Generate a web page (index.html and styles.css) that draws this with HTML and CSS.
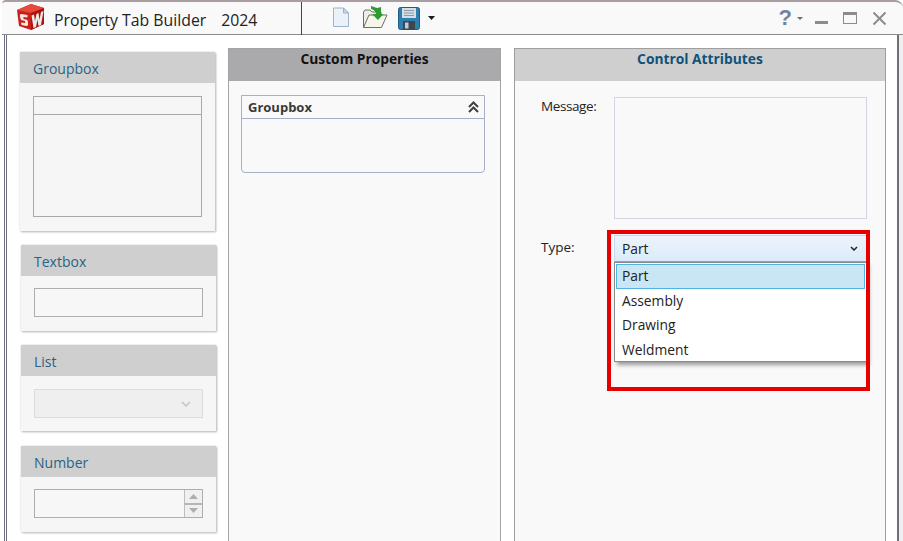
FILE: index.html
```html
<!DOCTYPE html>
<html lang="en">
<head>
<meta charset="utf-8">
<title>Property Tab Builder 2024</title>
<link rel="stylesheet" href="styles.css">
</head>
<body>
<div class="window">
  <header class="titlebar">
    <svg class="logo" width="30" height="28" viewBox="0 0 30 28">
      <path d="M1 7 L15 1 L28 5 L28 21 L15 27 L3 23 Z" fill="#c9201c"/>
      <path d="M1 7 L15 1 L28 5 L15 10 Z" fill="#e8493c"/>
      <path d="M15 10 L28 5 L28 21 L15 27 Z" fill="#a81512"/>
      <path d="M11.500 12 L5 11 Q3.500 11 4 14 L5 17 L9 18 L9 20 L5 19.500 L5.500 22 L10.500 23 Q12.500 23 12 20 L11.500 17 L7.500 16 L7.500 14 L11.500 14.500 Z" fill="#f4e6e2"/>
      <path d="M15.500 12.500 L18 11.500 L19 18 L20.500 11 L22.500 10 L23.500 17 L25 9 L27.500 8 L25 22 L22.500 23 L21.500 16.500 L20 24 L17.500 25 Z" fill="#f1e9e6"/>
    </svg>
    <span class="app-name">Property Tab Builder</span>
    <span class="app-year">2024</span>
    <div class="tools">
      <svg class="tool-new" width="18" height="21" viewBox="0 0 18 21">
        <path d="M1.500 1 H11.500 L16.500 6 V19.500 H1.500 Z" fill="#eaf1f9" stroke="#9fb3c8"/>
        <path d="M11.500 1 V6 H16.500 Z" fill="#c9d8e8" stroke="#9fb3c8"/>
      </svg>
      <svg class="tool-open" width="26" height="24" viewBox="0 0 26 24">
        <path d="M1.500 22.500 V7 L3 5 H8 L10 7 H19 V10" fill="#efeee6" stroke="#6f6f66"/>
        <path d="M1.500 22.500 L7 10 H25 L19.500 22.500 Z" fill="#f6f5ea" stroke="#6f6f66"/>
        <path d="M9 1 L15 3 L19 2 V9 H21.500 L16 15 L10 9 H14 Q13.500 5 9 4 Z" fill="#2f9a34"/>
      </svg>
      <svg class="tool-save" width="22" height="23" viewBox="0 0 22 23">
        <rect x="0.500" y="0.500" width="21" height="22" rx="2" fill="#2c7fae" stroke="#1f5d86"/>
        <rect x="4" y="1" width="14" height="10" fill="#d5dee6"/>
        <path d="M6 3.500 H16 M6 6 H16 M6 8.500 H16" stroke="#8a9aa8"/>
        <rect x="5" y="14" width="12" height="8.500" fill="#3b4650"/>
        <rect x="7" y="15.500" width="3.500" height="6" fill="#c0ccd6"/>
      </svg>
      <svg class="caret" width="7" height="4" viewBox="0 0 7 4"><path d="M0 0 H7 L3.500 4 Z" fill="#1a1a1a"/></svg>
    </div>
    <div class="win-controls">
      <span class="help">?</span>
      <svg class="help-caret" width="6" height="3" viewBox="0 0 6 3"><path d="M0 0 H6 L3 3 Z" fill="#5f6f85"/></svg>
      <span class="minimize"></span>
      <span class="maximize"></span>
      <svg class="close" width="15" height="15" viewBox="0 0 15 15"><path d="M1.500 1.500 L13.500 13.500 M13.500 1.500 L1.500 13.500" stroke="#8c8c8c" stroke-width="2"/></svg>
    </div>
  </header>

  <main class="workspace">
    <aside class="palette">
      <section class="card card-first">
        <h3 class="card-head">Groupbox</h3>
        <div class="card-body body-group">
          <div class="mini-group"><div class="mini-group-head"></div></div>
        </div>
      </section>
      <section class="card card-text">
        <h3 class="card-head">Textbox</h3>
        <div class="card-body body-tight"><div class="field"></div></div>
      </section>
      <section class="card">
        <h3 class="card-head">List</h3>
        <div class="card-body">
          <div class="field field-disabled">
            <svg width="10" height="6" viewBox="0 0 10 6"><path d="M1 1 L5 5 L9 1" fill="none" stroke="#c4c4c4" stroke-width="1.500"/></svg>
          </div>
        </div>
      </section>
      <section class="card card-number">
        <h3 class="card-head">Number</h3>
        <div class="card-body body-tight">
          <div class="field field-number">
            <div class="spin">
              <span class="spin-btn"><svg width="9" height="5" viewBox="0 0 9 5"><path d="M0 5 H9 L4.500 0 Z" fill="#aeaeae"/></svg></span>
              <span class="spin-btn"><svg width="9" height="5" viewBox="0 0 9 5"><path d="M0 0 H9 L4.500 5 Z" fill="#aeaeae"/></svg></span>
            </div>
          </div>
        </div>
      </section>
    </aside>

    <section class="panel panel-center">
      <h2 class="panel-head head-dark">Custom Properties</h2>
      <div class="panel-body">
        <div class="groupbox">
          <div class="groupbox-head">
            <span>Groupbox</span>
            <svg width="11" height="12" viewBox="0 0 11 12"><path d="M1 6 L5.500 1.500 L10 6 M1 11 L5.500 6.500 L10 11" fill="none" stroke="#3f3f3f" stroke-width="2"/></svg>
          </div>
        </div>
      </div>
    </section>

    <section class="panel panel-right">
      <h2 class="panel-head head-light">Control Attributes</h2>
      <div class="panel-body attrs">
        <div class="attr-label label-message">Message:</div>
        <div class="message-box"></div>
        <div class="attr-label label-type">Type:</div>
        <div class="combo">
          <span>Part</span>
          <svg width="8" height="5" viewBox="0 0 8 5"><path d="M1 1 L4 4 L7 1" fill="none" stroke="#222" stroke-width="1.500"/></svg>
        </div>
      </div>
      <ul class="dropdown">
        <li class="option option-active">Part</li>
        <li class="option">Assembly</li>
        <li class="option">Drawing</li>
        <li class="option">Weldment</li>
      </ul>
      <div class="highlight"></div>
    </section>
  </main>
</div>
</body>
</html>
```
FILE: styles.css
```css
* { box-sizing: border-box; }
html, body { margin: 0; height: 100%; }
body {
  background: #fff;
  font-family: "Open Sans", "Noto Sans", sans-serif;
  font-size: 14px;
  color: #222;
  overflow: hidden;
}
.window { width: 903px; height: 541px; display: flex; flex-direction: column; overflow: hidden; }

.titlebar {
  flex: none;
  height: 35px;
  margin-left: 2px;
  padding-left: 14px;
  display: flex;
  align-items: center;
  background: #f9f9f9;
  border-top: 2px solid #a89ea1;
  border-bottom: 1px solid #8b8b8b;
  border-top-right-radius: 8px;
  border-top-left-radius: 4px;
}
.logo { flex: none; margin-top: -3px; }
.app-name { margin-left: 8px; margin-top: 3px; font-size: 15.800px; color: #222; white-space: nowrap; }
.app-year { margin-left: 15px; margin-top: 3px; font-size: 15.800px; color: #222; }
.tools {
  margin-left: 44px;
  height: 33px;
  padding-left: 30px;
  display: flex;
  align-items: center;
  border-left: 1px solid #444;
}
.tool-new { margin-top: -1px; }
.tool-open { margin-left: 12px; margin-top: -3px; }
.tool-save { margin-left: 10px; }
.caret { margin-left: 8px; }
.win-controls { margin-left: auto; padding-right: 16px; display: flex; align-items: center; }
.help { font: bold 22px "Liberation Sans", sans-serif; color: #70839d; line-height: 22px; }
.help-caret { margin-left: 5px; }
.minimize { width: 13px; height: 3px; margin-left: 12px; margin-top: 9px; background: #8c8c8c; }
.maximize { width: 14px; height: 12px; margin-left: 15px; border: 1px solid #8c8c8c; border-top-width: 3px; }
.close { margin-left: 15px; }

.workspace {
  flex: 1;
  min-height: 0;
  margin-left: 4px;
  margin-right: 4px;
  padding: 13px 10px 0 15px;
  display: flex;
  align-items: stretch;
  border-left: 3px double #6e7180;
  border-right: 2px solid #6f7077;
  background: #fff;
  box-shadow: 5px 0 0 #eeeeee;
}

.palette { flex: none; width: 196px; margin-top: 4px; display: flex; flex-direction: column; gap: 14px; margin-left: -2px; }
.card {
  flex: none;
  margin-left: 1px;
  width: 195px;
  background: #f6f6f6;
  box-shadow: 1px 1px 2px #b8b8b8, 0 0 2px #dedede;
}
.card-first { margin-left: 0; }
.card-number { margin-top: 1px; }
.card-head {
  margin: 0;
  height: 31px;
  padding: 7px 0 0 13px;
  background: #cfcfcf;
  color: #2a6382;
  font-size: 14px;
  font-weight: 400;
  line-height: 20px;
}
.card-body { height: 55px; padding: 13px 13px 0 13px; }
.body-tight { padding-top: 12px; }
.body-group { height: 148px; }
.mini-group { height: 121px; border: 1px solid #a9a9a9; }
.mini-group-head { height: 18px; border-bottom: 1px solid #a9a9a9; }
.field { height: 29px; border: 1px solid #aeaeae; background: #f7f7f7; }
.field-disabled {
  display: flex;
  align-items: center;
  justify-content: flex-end;
  padding-right: 11px;
  background: #efefef;
  border-color: #dcdcdc;
}
.field-number { display: flex; justify-content: flex-end; }
.spin { width: 18px; display: flex; flex-direction: column; }
.spin-btn {
  flex: 1;
  display: flex;
  align-items: center;
  justify-content: center;
  border-left: 1px solid #bdbdbd;
  background: #f0f0f0;
}
.spin-btn + .spin-btn { border-top: 2px solid #b5b5b5; }

.panel { position: relative; flex: none; display: flex; flex-direction: column; }
.panel-center { width: 273px; margin-left: 12px; border: 1px solid #a3a3a3; border-bottom: 0; background: #f9f9f9; }
.panel-right { width: 372px; margin-left: 13px; border: 1px solid #9e9e9e; border-bottom: 0; background: #f9f9f9; }
.panel-head {
  flex: none;
  margin: 0;
  height: 32px;
  font-size: 13.800px;
  font-weight: 700;
  line-height: 20px;
  text-align: center;
}
.head-dark { background: #aaaaad; color: #111; }
.head-light { background: #cfcfcf; color: #0f5279; }
.panel-body { flex: 1; }
.panel-center .panel-body { padding: 14px 15px 0 12px; }
.groupbox {
  height: 78px;
  border: 1px solid #a9aec8;
  border-radius: 0 0 4px 4px;
}
.groupbox-head {
  height: 23px;
  padding: 0 5px 0 6px;
  display: flex;
  align-items: center;
  justify-content: space-between;
  border-bottom: 1px solid #a9aec8;
  font-weight: 700;
  font-size: 13px;
  color: #3a3a3a;
}
.attrs {
  display: grid;
  grid-template-columns: 99px 253px;
  grid-template-rows: 122px auto;
  row-gap: 16px;
  padding: 16px 0 0 0;
  align-content: start;
}
.attr-label { padding-left: 26px; font-size: 13.500px; line-height: 18px; color: #222; }
.label-message { letter-spacing: -0.400px; }
.label-type { padding-top: 3px; }
.message-box { border: 1px solid #d3d6e2; background: #f9f9f9; }
.combo {
  height: 27px;
  padding: 0 8px 0 7px;
  display: flex;
  align-items: center;
  justify-content: space-between;
  background: linear-gradient(#ecf4fc, #dcebfa);
  border: 1px solid #c8d8ec;
  border-bottom: 1px solid #7fa6cc;
  font-size: 13.800px;
}
.dropdown {
  position: absolute;
  left: 99px;
  top: 213px;
  width: 252px;
  height: 100px;
  margin: 0;
  padding: 1px;
  list-style: none;
  background: #fff;
  border: 1px solid #8a8a8a;
  border-right: 0;
  box-shadow: 3px 3px 4px #9a9a9a;
}
.option { height: 24.500px; padding-left: 6px; font-size: 13.800px; line-height: 24px; color: #222; }
.option-active { height: 24.500px; padding-left: 5px; line-height: 22px; background: #c9e6f5; border: 1px solid #4fb3e4; }
.highlight {
  position: absolute;
  left: 92px;
  top: 181px;
  width: 263px;
  height: 161px;
  border: 4px solid #e60000;
  pointer-events: none;
}
```
